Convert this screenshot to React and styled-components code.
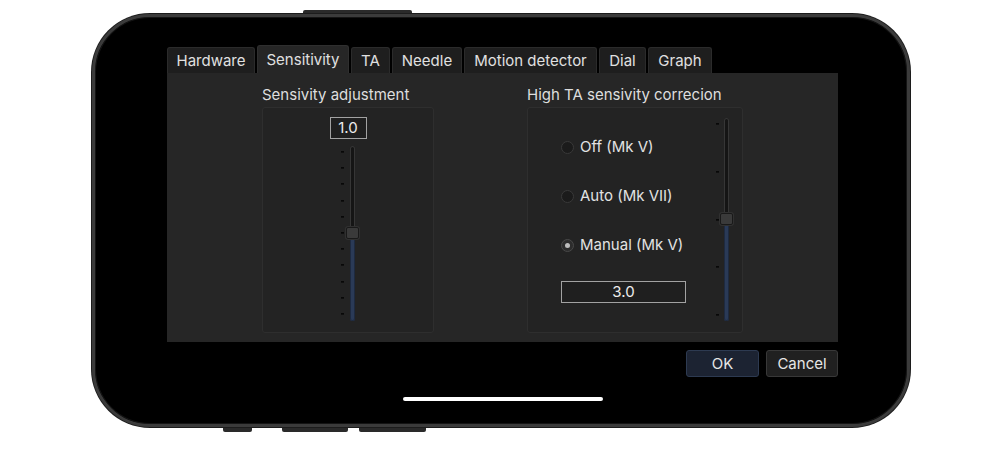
import React from 'react';
import styled, { createGlobalStyle } from 'styled-components';

const GlobalStyle = createGlobalStyle`
  html, body {
    margin: 0;
    background: #ffffff;
  }
  body {
    font-family: Inter, "Liberation Sans", Arial, sans-serif;
    -webkit-font-smoothing: antialiased;
  }
`;

const Stage = styled.div`
  width: 1000px;
  height: 462px;
  padding: 14px 0 0 92px;
  box-sizing: border-box;
  overflow: hidden;
`;

/* the phone body, hardware buttons sit behind it */
const Device = styled.div`
  position: relative;
  width: 818px;
  height: 413px;
`;

const HardButton = styled.div`
  position: absolute;
  left: ${p => p.$left}px;
  width: ${p => p.$width}px;
  height: 6px;
  background: #2a2a2a;
  border-radius: 2px;
  ${p => (p.$top ? 'top: -4px;' : 'bottom: -5px;')}
`;

const Phone = styled.div`
  position: relative;
  width: 100%;
  height: 100%;
  box-sizing: border-box;
  border: 3px solid #3b3b3b;
  box-shadow: 0 0 0 1px #1c1c1c, inset 0 0 0 1px #141414;
  border-radius: 58px;
  background: #000;
  padding: 28px 0 0 72px;
`;

const HomeBar = styled.div`
  position: absolute;
  left: 308px;
  top: 380px;
  width: 200px;
  height: 4px;
  border-radius: 2px;
  background: #fff;
`;

const Dialog = styled.div`
  width: 671px;
  display: flex;
  flex-direction: column;
  color: #e2e2e2;
  font-size: 15px;
`;

const TabBar = styled.div`
  display: flex;
  align-items: flex-end;
  gap: 2px;
  height: 28px;
`;

const Tab = styled.div`
  width: ${p => p.$width}px;
  height: ${p => (p.$active ? 28 : 26)}px;
  box-sizing: border-box;
  display: flex;
  align-items: center;
  justify-content: center;
  background: ${p => (p.$active ? '#262626' : '#1e1e1e')};
  border: 1px solid ${p => (p.$active ? '#2f2f2f' : '#2b2b2b')};
  border-bottom: none;
  border-radius: 3px 3px 0 0;
  color: #e0e0e0;
  white-space: nowrap;
`;

const Panel = styled.div`
  height: 269px;
  box-sizing: border-box;
  background: #262626;
  padding: 12px 95px 9px;
  display: flex;
  justify-content: space-between;
`;

const Column = styled.div`
  display: flex;
  flex-direction: column;
`;

const GroupLabel = styled.div`
  line-height: 20px;
  height: 20px;
  margin-bottom: 2px;
  color: #dedede;
  white-space: nowrap;
`;

const GroupBox = styled.div`
  width: ${p => p.$width}px;
  height: 226px;
  box-sizing: border-box;
  background: #232323;
  border: 1px solid #2e2e2e;
  border-radius: 3px;
`;

const SensBox = styled(GroupBox)`
  display: flex;
  flex-direction: column;
  align-items: center;
  padding-top: 9px;
`;

const CorrBox = styled(GroupBox)`
  display: flex;
  justify-content: space-between;
  padding: 10px 13px 0 33px;
`;

const ValueField = styled.div`
  width: ${p => p.$width}px;
  height: 22px;
  box-sizing: border-box;
  border: 1px solid #a2a2a2;
  background: #1f1f1f;
  color: #ececec;
  line-height: 20px;
  text-align: center;
  margin-top: ${p => p.$gap || 0}px;
`;

const SliderRow = styled.div`
  display: flex;
  gap: ${p => p.$gap}px;
  margin-top: ${p => p.$top || 0}px;
`;

const TickColumn = styled.div`
  height: ${p => p.$height}px;
  box-sizing: border-box;
  padding: ${p => p.$insetTop}px 0 ${p => p.$insetBottom}px;
  display: flex;
  flex-direction: column;
  justify-content: space-between;
`;

const Tick = styled.div`
  width: 3px;
  height: 1px;
  background: #080808;
  box-shadow: 0 1px 0 #101010;
`;

const Track = styled.div`
  position: relative;
  width: 5px;
  height: ${p => p.$height}px;
  border-radius: 3px;
  background: #151515;
  box-shadow: inset 0 0 0 1px #363636;
`;

const TrackFill = styled.div`
  position: absolute;
  left: 0;
  right: 0;
  bottom: 0;
  border-radius: 0 0 3px 3px;
  background: #2a3a57;
  box-shadow: inset 0 0 0 1px #1e2a40;
`;

const Thumb = styled.div`
  position: absolute;
  left: -4px;
  width: 13px;
  height: 12px;
  box-sizing: border-box;
  border-radius: 2px;
  background: #3a3a3a;
  border: 1px solid #191919;
  box-shadow: 0 0 0 1px #303030;
`;

const RadioArea = styled.div`
  display: flex;
  flex-direction: column;
  padding-top: 19px;
`;

const RadioList = styled.div`
  display: flex;
  flex-direction: column;
  gap: 29px;
`;

const RadioRow = styled.label`
  display: flex;
  align-items: center;
  gap: 6px;
  height: 20px;
  line-height: 20px;
  color: #e2e2e2;
  white-space: nowrap;
`;

const RadioDot = styled.span`
  width: 13px;
  height: 13px;
  box-sizing: border-box;
  border-radius: 50%;
  background: ${p => (p.$on ? '#2c2c2c' : '#1b1b1b')};
  border: 1px solid ${p => (p.$on ? '#484848' : '#393939')};
  display: flex;
  align-items: center;
  justify-content: center;
  &::after {
    content: '';
    width: 5px;
    height: 5px;
    border-radius: 50%;
    background: ${p => (p.$on ? '#bdbdbd' : 'transparent')};
  }
`;

const ButtonRow = styled.div`
  display: flex;
  justify-content: flex-end;
  gap: 7px;
  margin-top: 8px;
`;

const DialogButton = styled.button`
  width: ${p => p.$width}px;
  height: 27px;
  border-radius: 3px;
  font-family: inherit;
  font-size: 15px;
  color: #e6e6e6;
  background: ${p => (p.$primary ? '#1c2332' : '#202020')};
  border: 1px solid ${p => (p.$primary ? '#2d3a51' : '#383838')};
  padding: 0;
`;

const Slider = ({ height, ticks, insetTop, insetBottom, level, gap, top }) => {
  const step = (height - insetTop - insetBottom) / (ticks - 1);
  const center = insetTop + level * step;
  return (
    <SliderRow $gap={gap} $top={top}>
      <TickColumn $height={height} $insetTop={insetTop} $insetBottom={insetBottom}>
        {Array.from({ length: ticks }, (_, i) => (
          <Tick key={i} />
        ))}
      </TickColumn>
      <Track $height={height}>
        <TrackFill style={{ height: height - center }} />
        <Thumb style={{ top: center - 6 }} />
      </Track>
    </SliderRow>
  );
};

const tabs = [
  { label: 'Hardware', width: 88 },
  { label: 'Sensitivity', width: 92 },
  { label: 'TA', width: 39 },
  { label: 'Needle', width: 70 },
  { label: 'Motion detector', width: 133 },
  { label: 'Dial', width: 47 },
  { label: 'Graph', width: 64 },
];
const modes = [
  { label: 'Off (Mk V)', on: false },
  { label: 'Auto (Mk VII)', on: false },
  { label: 'Manual (Mk V)', on: true },
];

const App = () => {
  return (
    <Stage>
      <GlobalStyle />
      <Device>
        <HardButton $top $left={211} $width={109} />
        <HardButton $left={131} $width={29} />
        <HardButton $left={190} $width={66} />
        <HardButton $left={267} $width={67} />
        <Phone>
          <Dialog>
            <TabBar>
              {tabs.map(t => (
                <Tab key={t.label} $width={t.width} $active={t.label === 'Sensitivity'}>
                  {t.label}
                </Tab>
              ))}
            </TabBar>
            <Panel>
              <Column>
                <GroupLabel>Sensivity adjustment</GroupLabel>
                <SensBox $width={172}>
                  <ValueField $width={37}>1.0</ValueField>
                  <Slider height={175} ticks={11} insetTop={5} insetBottom={7} level={5} gap={6} top={7} />
                </SensBox>
              </Column>
              <Column>
                <GroupLabel>High TA sensivity correcion</GroupLabel>
                <CorrBox $width={216}>
                  <RadioArea>
                    <RadioList>
                      {modes.map(m => (
                        <RadioRow key={m.label}>
                          <RadioDot $on={m.on} />
                          {m.label}
                        </RadioRow>
                      ))}
                    </RadioList>
                    <ValueField $width={125} $gap={26}>3.0</ValueField>
                  </RadioArea>
                  <Slider height={203} ticks={5} insetTop={5} insetBottom={6} level={2} gap={5} />
                </CorrBox>
              </Column>
            </Panel>
            <ButtonRow>
              <DialogButton $primary $width={73}>OK</DialogButton>
              <DialogButton $width={72}>Cancel</DialogButton>
            </ButtonRow>
          </Dialog>
          <HomeBar />
        </Phone>
      </Device>
    </Stage>
  );
};

export default App;
